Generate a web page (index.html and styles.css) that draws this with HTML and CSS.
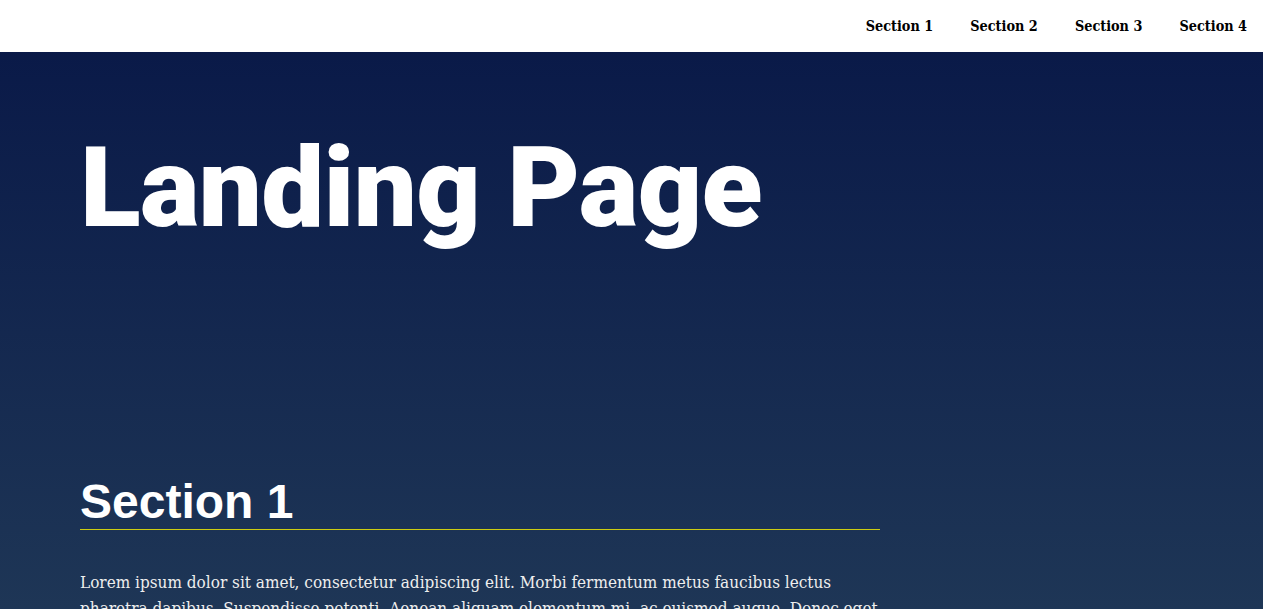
FILE: index.html
```html
<!DOCTYPE html>
<html lang="en">
<head>
<meta charset="utf-8">
<title>Landing Page</title>
<link rel="stylesheet" href="styles.css">
</head>
<body>
<header class="page-header">
  <nav class="navbar">
    <ul class="navbar-list">
      <li class="navbar-item"><a class="menu-link" href="#section1">Section 1</a></li>
      <li class="navbar-item"><a class="menu-link" href="#section2">Section 2</a></li>
      <li class="navbar-item"><a class="menu-link" href="#section3">Section 3</a></li>
      <li class="navbar-item"><a class="menu-link" href="#section4">Section 4</a></li>
    </ul>
  </nav>
</header>
<main class="main">
  <header class="hero">
    <h1 class="hero-title">Landing Page</h1>
  </header>
  <section id="section1" class="section">
    <div class="container">
      <h2 class="section-title">Section 1</h2>
      <p class="section-text">Lorem ipsum dolor sit amet, consectetur adipiscing elit. Morbi fermentum metus faucibus lectus pharetra dapibus. Suspendisse potenti. Aenean aliquam elementum mi, ac euismod augue. Donec eget lacinia ex. Phasellus imperdiet porta orci eget mollis. Sed convallis sollicitudin mauris ac tincidunt. Donec bibendum, nulla eget bibendum consectetur, sem nisi aliquam leo, ut pulvinar quam nunc eu augue. Pellentesque maximus imperdiet elit a pharetra. Duis lectus mi, aliquam in mi quis, aliquam porttitor lacus. Morbi a tincidunt felis. Sed leo nunc, pharetra et elementum non, faucibus vitae elit. Integer nec libero venenatis libero ultricies molestie semper in tellus. Sed congue et odio sed euismod.</p>
      <p class="section-text">Aliquam a convallis justo. Vivamus venenatis, erat eget pulvinar gravida, ipsum lacus aliquet velit, vel luctus diam ipsum a diam. Cras eu tincidunt arcu, vitae rhoncus purus. Vestibulum fermentum consectetur porttitor. Suspendisse imperdiet porttitor tortor, eget elementum tortor mollis non.</p>
    </div>
  </section>
</main>
</body>
</html>
```

FILE: styles.css
```css
html {
  background: linear-gradient(180deg, rgb(8, 23, 71) 0px, rgb(30, 54, 86) 609px, rgb(136, 203, 171) 4000px);
}

body {
  margin: 0;
  font-family: "DejaVu Serif", serif;
  color: #fff;
}

.page-header {
  background: #fff;
  height: 52px;
}

.navbar-list {
  list-style: none;
  margin: 0;
  padding: 0;
  text-align: right;
}

.navbar-item {
  display: inline-block;
}

.menu-link {
  display: block;
  padding: 16px;
  line-height: 20px;
  font-size: 14.3px;
  font-weight: bold;
  font-stretch: condensed;
  color: #000;
  text-decoration: none;
}

.main {
  margin: 0 16px;
}

.hero {
  padding-top: 69px;
  min-height: 289px;
}

.hero-title {
  margin: 0 0 0 64px;
  font-family: Roboto, Lato, sans-serif;
  font-weight: 900;
  font-size: 112px;
  letter-spacing: -0.7px;
  line-height: 134px;
  color: #fff;
}

.container {
  max-width: 800px;
  padding: 64px;
}

.section-title {
  margin: 0 0 40px;
  font-family: "Liberation Sans", Arial, sans-serif;
  font-size: 48px;
  font-weight: bold;
  line-height: 55px;
  border-bottom: 1px solid #cccc11;
  color: #fff;
}

.section-text {
  margin: 16px 0;
  font-size: 17px;
  font-stretch: condensed;
  line-height: 25.6px;
  color: #eee;
}
```
